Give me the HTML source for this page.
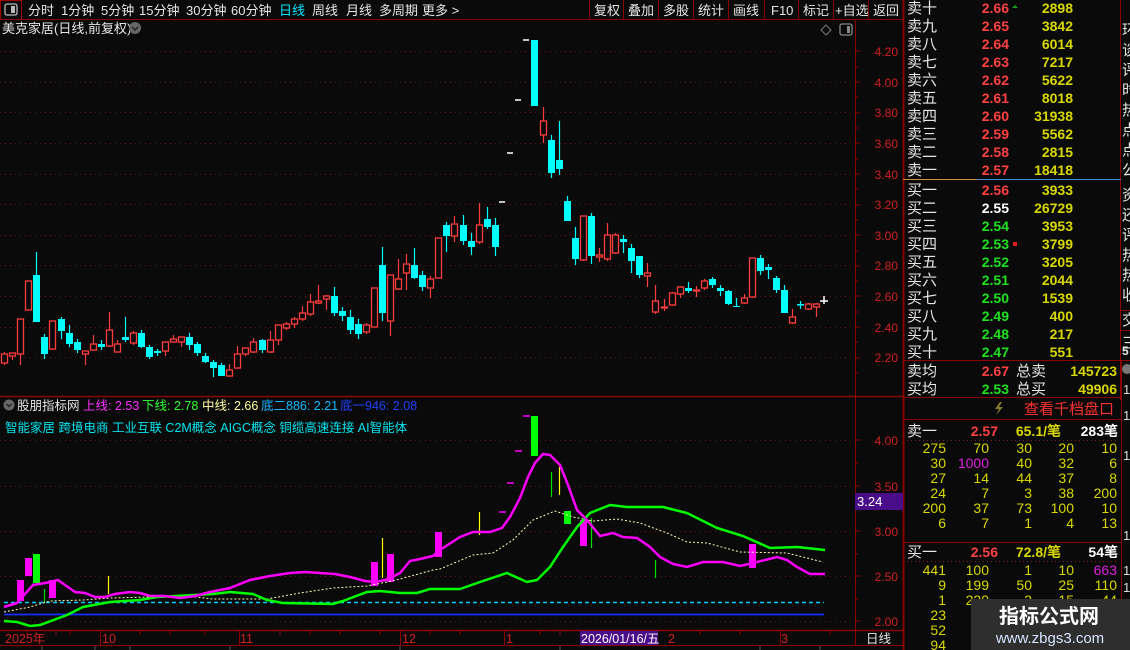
<!DOCTYPE html>
<html><head><meta charset="utf-8"><style>
html,body{margin:0;padding:0;background:#0a0a0a;width:1130px;height:650px;overflow:hidden}
svg{display:block;font-family:"Liberation Sans","Noto Sans CJK SC",sans-serif}
.t{font-size:13px;fill:#e6e6e6}
.ax{font-size:12px;fill:#d02020;text-anchor:end}
.ob{font-size:15px;fill:#e6e6e6}
.pr{font-size:14px;font-weight:bold;text-anchor:end}
.bk{font-size:14px;fill:#d8d800;text-anchor:end}
</style></head><body>
<svg width="1130" height="650" viewBox="0 0 1130 650">
<rect width="1130" height="650" fill="#0a0a0a"/>
<rect x="0.5" y="0.5" width="21" height="19" fill="none" stroke="#a00000"/>
<rect x="5" y="4" width="12" height="11" rx="2" fill="none" stroke="#bbb" stroke-width="1.3"/><rect x="11" y="6" width="4" height="7" fill="#bbb"/>
<line x1="0" y1="19.5" x2="903" y2="19.5" stroke="#8b0000"/>
<g class="t">
<text x="28" y="15">分时</text><text x="61" y="15">1分钟</text><text x="101" y="15">5分钟</text><text x="139" y="15">15分钟</text><text x="186" y="15">30分钟</text><text x="231" y="15">60分钟</text><text x="279" y="15" fill="#00e5ff">日线</text><text x="312" y="15">周线</text><text x="346" y="15">月线</text><text x="379" y="15">多周期</text><text x="422" y="15">更多 &gt;</text>
<text x="594" y="15">复权</text><text x="628" y="15">叠加</text><text x="663" y="15">多股</text><text x="698" y="15">统计</text><text x="733" y="15">画线</text><text x="771" y="15">F10</text><text x="803" y="15">标记</text><text x="835" y="15">+自选</text><text x="873" y="15">返回</text>
</g>
<g stroke="#8b0000"><line x1="589.5" y1="0" x2="589.5" y2="19"/><line x1="623.5" y1="0" x2="623.5" y2="19"/><line x1="658.5" y1="0" x2="658.5" y2="19"/><line x1="693.5" y1="0" x2="693.5" y2="19"/><line x1="728.5" y1="0" x2="728.5" y2="19"/><line x1="764.5" y1="0" x2="764.5" y2="19"/><line x1="798.5" y1="0" x2="798.5" y2="19"/><line x1="833.5" y1="0" x2="833.5" y2="19"/><line x1="868.5" y1="0" x2="868.5" y2="19"/></g>
<text x="2" y="33" class="t" font-size="12.5">美克家居(日线,前复权)</text>
<circle cx="135" cy="28" r="6" fill="#666"/><path d="M132 27l3 3 3-3" stroke="#222" stroke-width="1.5" fill="none"/>
<path d="M826 25l5 5-5 5-5-5z" fill="none" stroke="#777"/>
<rect x="840" y="24" width="12" height="11" rx="2" fill="none" stroke="#888" stroke-width="1.3"/><rect x="847" y="26" width="3" height="7" fill="#888"/>
<g stroke="#5a1414" stroke-dasharray="1 4">
<line x1="0" y1="51.5" x2="855" y2="51.5"/><line x1="0" y1="82.5" x2="855" y2="82.5"/><line x1="0" y1="112.5" x2="855" y2="112.5"/><line x1="0" y1="143.5" x2="855" y2="143.5"/><line x1="0" y1="174.5" x2="855" y2="174.5"/><line x1="0" y1="204.5" x2="855" y2="204.5"/><line x1="0" y1="235.5" x2="855" y2="235.5"/><line x1="0" y1="265.5" x2="855" y2="265.5"/><line x1="0" y1="296.5" x2="855" y2="296.5"/><line x1="0" y1="327.5" x2="855" y2="327.5"/><line x1="0" y1="357.5" x2="855" y2="357.5"/>
</g>
<line x1="855.5" y1="19" x2="855.5" y2="645" stroke="#8b0000"/>
<line x1="903.5" y1="0" x2="903.5" y2="650" stroke="#8b0000" stroke-width="2"/>
<g stroke="#8b0000"><path d="M855 51h5M855 82h5M855 113h5M855 143h5M855 174h5M855 205h5M855 235h5M855 266h5M855 296h5M855 327h5M855 358h5M855 67h3M855 97h3M855 128h3M855 159h3M855 189h3M855 220h3M855 251h3M855 281h3M855 312h3M855 342h3M855 373h3"/></g>
<g class="ax"><text x="898" y="56">4.20</text><text x="898" y="87">4.00</text><text x="898" y="117">3.80</text><text x="898" y="148">3.60</text><text x="898" y="179">3.40</text><text x="898" y="209">3.20</text><text x="898" y="240">3.00</text><text x="898" y="270">2.80</text><text x="898" y="301">2.60</text><text x="898" y="332">2.40</text><text x="898" y="362">2.20</text></g>
<path stroke="#ff3c3c" stroke-width="1.2" fill="none" d="M4.5 352V365M12.5 353V360M20.5 319V365M28.5 281V310M52.5 321V350M85.5 351V365M93.5 335V350M109.5 312V347M117.5 340V352M133.5 331V345M165.5 342V356M173.5 335V342M181.5 337V347M229.5 364V377M237.5 346V369M245.5 348V356M253.5 338V353M270.5 331V353M278.5 325V345M286.5 322V330M294.5 317V328M302.5 306V321M310.5 294V316M318.5 285V304M326.5 295V310M366.5 323V334M374.5 288V327M390.5 275V336M398.5 259V290M406.5 254V290M430.5 276V298M438.5 238V278M454.5 216V242M479.5 203V244M543.5 107V143M583.5 216V261M599.5 248V262M607.5 223V261M615.5 233V254M647.5 263V287M655.5 285V314M664.5 299V311M672.5 292V306M680.5 286V298M696.5 286V297M704.5 279V290M744.5 294V304M752.5 258V298M792.5 309V324M808.5 303V310M816.5 303V317"/>
<g stroke="#ff3c3c" stroke-width="1.3" fill="#0a0a0a">
<rect x="1.5" y="354" width="6" height="9"/><rect x="9.5" y="353" width="6" height="3"/><rect x="17.5" y="319" width="6" height="35"/><rect x="25.5" y="281" width="6" height="29"/><rect x="49.5" y="321" width="6" height="28"/><rect x="82.5" y="351" width="6" height="3"/><rect x="90.5" y="344" width="6" height="6"/><rect x="106.5" y="330" width="6" height="16"/><rect x="114.5" y="344" width="6" height="8"/><rect x="130.5" y="333" width="6" height="10"/><rect x="162.5" y="342" width="6" height="9"/><rect x="170.5" y="339" width="6" height="3"/><rect x="178.5" y="337" width="6" height="5"/><rect x="226.5" y="370" width="6" height="6"/><rect x="234.5" y="354" width="6" height="14"/><rect x="242.5" y="348" width="6" height="6"/><rect x="250.5" y="342" width="6" height="10"/><rect x="267.5" y="340" width="6" height="12"/><rect x="275.5" y="325" width="6" height="15"/><rect x="283.5" y="324" width="6" height="4"/><rect x="291.5" y="319" width="6" height="5"/><rect x="299.5" y="313" width="6" height="6"/><rect x="307.5" y="302" width="6" height="12"/><rect x="315.5" y="301" width="6" height="2"/><rect x="323.5" y="296" width="6" height="3"/><rect x="363.5" y="325" width="6" height="7"/><rect x="371.5" y="288" width="6" height="39"/><rect x="387.5" y="275" width="6" height="46"/><rect x="395.5" y="279" width="6" height="10"/><rect x="403.5" y="264" width="6" height="9"/><rect x="427.5" y="279" width="6" height="9"/><rect x="435.5" y="238" width="6" height="40"/><rect x="451.5" y="224" width="6" height="12"/><rect x="476.5" y="225" width="6" height="17"/><rect x="540.5" y="121" width="6" height="14"/><rect x="580.5" y="216" width="6" height="44"/><rect x="596.5" y="255" width="6" height="2"/><rect x="604.5" y="235" width="6" height="24"/><rect x="612.5" y="235" width="6" height="18"/><rect x="644.5" y="273" width="6" height="3"/><rect x="652.5" y="301" width="6" height="11"/><rect x="661.5" y="307" width="6" height="1"/><rect x="669.5" y="293" width="6" height="12"/><rect x="677.5" y="287" width="6" height="7"/><rect x="693.5" y="290" width="6" height="1"/><rect x="701.5" y="281" width="6" height="7"/><rect x="741.5" y="298" width="6" height="5"/><rect x="749.5" y="258" width="6" height="39"/><rect x="789.5" y="317" width="6" height="6"/><rect x="805.5" y="304" width="6" height="5"/><rect x="813.5" y="304" width="6" height="3"/>
</g>
<path stroke="#00ffff" stroke-width="1.2" fill="none" d="M36.5 252V322M44.5 334V359M61.5 317V339M69.5 325V347M77.5 339V353M101.5 340V350M125.5 317V342M141.5 330V348M149.5 345V359M157.5 349V356M189.5 333V350M197.5 342V356M205.5 353V363M213.5 360V377M221.5 363V376M262.5 339V353M334.5 287V316M342.5 307V321M350.5 310V334M358.5 319V339M382.5 247V321M414.5 248V279M422.5 271V291M446.5 222V252M463.5 215V245M471.5 233V255M487.5 207V229M495.5 218V256M551.5 135V178M559.5 121V175M567.5 196V221M575.5 227V265M591.5 213V264M623.5 235V253M631.5 244V273M639.5 256V278M688.5 282V293M712.5 277V288M720.5 285V296M728.5 290V305M736.5 298V307M760.5 255V275M768.5 264V279M776.5 276V293M784.5 285V313M800.5 301V309"/>
<g fill="#00ffff">
<rect x="33" y="275" width="7" height="47"/><rect x="41" y="337" width="7" height="17"/><rect x="58" y="319" width="7" height="12"/><rect x="66" y="333" width="7" height="11"/><rect x="74" y="342" width="7" height="8"/><rect x="98" y="344" width="7" height="3"/><rect x="122" y="337" width="7" height="3"/><rect x="138" y="333" width="7" height="14"/><rect x="146" y="347" width="7" height="10"/><rect x="154" y="351" width="7" height="2"/><rect x="186" y="337" width="7" height="8"/><rect x="194" y="344" width="7" height="9"/><rect x="202" y="356" width="7" height="6"/><rect x="210" y="362" width="7" height="6"/><rect x="218" y="365" width="7" height="11"/><rect x="259" y="340" width="7" height="10"/><rect x="331" y="296" width="7" height="17"/><rect x="339" y="311" width="7" height="5"/><rect x="347" y="317" width="7" height="13"/><rect x="355" y="324" width="7" height="10"/><rect x="379" y="265" width="7" height="48"/><rect x="411" y="265" width="7" height="13"/><rect x="419" y="275" width="7" height="12"/><rect x="443" y="225" width="7" height="11"/><rect x="460" y="225" width="7" height="16"/><rect x="468" y="241" width="7" height="6"/><rect x="484" y="219" width="7" height="8"/><rect x="492" y="225" width="7" height="22"/><rect x="531" y="40" width="7" height="66"/><rect x="548" y="140" width="7" height="33"/><rect x="556" y="160" width="7" height="9"/><rect x="564" y="201" width="7" height="20"/><rect x="572" y="238" width="7" height="21"/><rect x="588" y="216" width="7" height="40"/><rect x="620" y="239" width="7" height="3"/><rect x="628" y="248" width="7" height="13"/><rect x="636" y="256" width="7" height="19"/><rect x="685" y="288" width="7" height="3"/><rect x="709" y="279" width="7" height="6"/><rect x="717" y="288" width="7" height="3"/><rect x="725" y="291" width="7" height="13"/><rect x="733" y="306" width="7" height="1"/><rect x="757" y="258" width="7" height="13"/><rect x="765" y="267" width="7" height="3"/><rect x="773" y="278" width="7" height="12"/><rect x="781" y="290" width="7" height="23"/><rect x="797" y="304" width="7" height="1.5"/>
</g>
<path stroke="#fff" stroke-width="1.5" d="M499 202h6M507 153h6M515 100h6M523 40h6M820 301h8M824 296v8"/>
<line x1="0" y1="396.5" x2="903" y2="396.5" stroke="#8b0000" stroke-width="1.5"/>
<circle cx="9" cy="405" r="5.5" fill="#666"/><path d="M6.5 404l2.5 2.5 2.5-2.5" stroke="#222" stroke-width="1.4" fill="none"/>
<g font-size="12.5"><text x="17" y="410" fill="#e6e6e6">股朋指标网</text><text x="83" y="410" fill="#ff30ff">上线: 2.53</text><text x="142" y="410" fill="#30ff30">下线: 2.78</text><text x="202" y="410" fill="#ffffa0">中线: 2.66</text><text x="261" y="410" fill="#10b8ff">底二886: 2.21</text><text x="340" y="410" fill="#2040ff">底一946: 2.08</text></g>
<text x="5" y="432" font-size="12.5" fill="#00e5ee">智能家居 跨境电商 工业互联 C2M概念 AIGC概念 铜缆高速连接 AI智能体</text>
<g stroke="#5a1414" stroke-dasharray="1 4"><line x1="0" y1="440.5" x2="855" y2="440.5"/><line x1="0" y1="486.5" x2="855" y2="486.5"/><line x1="0" y1="531.5" x2="855" y2="531.5"/><line x1="0" y1="576.5" x2="855" y2="576.5"/><line x1="0" y1="621.5" x2="855" y2="621.5"/></g>
<g stroke="#8b0000"><path d="M855 440h5M855 486h5M855 531h5M855 576h5M855 621h5M855 463h3M855 508h3M855 554h3M855 599h3"/></g>
<g class="ax" font-size="13"><text x="898" y="445">4.00</text><text x="898" y="491">3.50</text><text x="898" y="536">3.00</text><text x="898" y="581">2.50</text><text x="898" y="626">2.00</text></g>
<rect x="855" y="493" width="48" height="17" fill="#4a0d8a"/><text x="857" y="506" font-size="13" fill="#fff">3.24</text>
<line x1="4" y1="602.5" x2="824" y2="602.5" stroke="#00c8ff" stroke-width="1.5" stroke-dasharray="4 3"/>
<line x1="4" y1="614.5" x2="824" y2="614.5" stroke="#1030ff" stroke-width="1.8"/>
<g fill="#ff00ff"><rect x="17" y="580" width="7" height="21"/><rect x="25" y="558" width="7" height="18"/><rect x="49" y="580" width="7" height="18"/><rect x="371" y="562" width="7" height="24"/><rect x="387" y="554" width="7" height="28"/><rect x="435" y="532" width="7" height="25"/><rect x="580" y="520" width="7" height="26"/><rect x="749" y="544" width="7" height="24"/></g>
<g fill="#00ff00"><rect x="33" y="554" width="7" height="29"/><rect x="531" y="416" width="7" height="40"/><rect x="564" y="511" width="7" height="13"/></g>
<path stroke="#ff00ff" stroke-width="1.5" d="M499 512h7M507 483h7M515 451h7M523 416h7"/>
<path stroke="#ffff00" stroke-width="1.2" d="M108.5 576V594M382.5 538V578M479.5 512V535M559.5 467V495"/>
<path stroke="#00dd00" stroke-width="1.2" d="M44.5 589V603M551.5 472V497M591.5 518V548M655.5 560V578"/>
<polyline fill="none" stroke="#ffffb0" stroke-width="1" stroke-dasharray="2 2" points="4,612 30,607 50,601 83,600 110,598 150,597 187,596 213,599 267,599 300,593 333,588 367,586 387,582 400,579 433,570 440,569 473,555 493,553 513,540 533,520 555,511 573,517 593,521 617,519 640,523 667,533 687,542 707,543 740,552 787,553 823,562"/>
<polyline fill="none" stroke="#00ff00" stroke-width="2.5" points="4,621 17,622 30,626 40,625 67,615 83,607 110,602 140,600 157,597 213,594 230,592 253,594 267,600 283,603 333,604 343,601 367,592 380,591 400,593 417,593 430,589 440,589 460,589 480,582 507,573 527,582 537,580 550,567 563,547 577,527 590,513 610,505 627,507 663,507 687,513 717,528 743,536 770,548 797,547 825,550"/>
<polyline fill="none" stroke="#ff00ff" stroke-width="2.5" points="4,607 17,603 25,594 33,585 45,583 50,582 58,580 65,585 75,592 85,593 95,597 105,597 115,594 130,592 140,593 150,596 165,596 180,598 195,596 210,592 230,588 250,580 270,576 290,573 305,572 320,573 335,574 350,577 365,581 375,582 385,580 392,577 400,573 410,561 420,559 433,556 440,550 460,537 473,532 490,532 502,528 510,517 520,498 528,477 535,463 543,454 550,455 560,465 568,485 577,510 587,520 600,536 613,533 623,537 637,538 650,547 660,557 673,564 687,567 703,562 723,562 740,566 753,563 777,557 787,560 797,567 810,574 825,574"/>
<line x1="0" y1="630.5" x2="903" y2="630.5" stroke="#8b0000" stroke-width="1.5"/>
<line x1="0" y1="645.5" x2="903" y2="645.5" stroke="#8b0000"/>
<g stroke="#8b0000"><path d="M100.5 631v14M239.5 631v14M400.5 631v14M504.5 631v14M780.5 631v14M27 631v4M56 631v4M70 631v4M140 631v4M170 631v4M205 631v4M280 631v4M310 631v4M340 631v4M380 631v4M430 631v4M460 631v4M540 631v4M560 631v4M700 631v4M740 631v4M830 631v4"/></g>
<g font-size="12.5" fill="#d02020"><text x="5" y="643">2025年</text><text x="102" y="643">10</text><text x="240" y="643">11</text><text x="402" y="643">12</text><text x="506" y="643">1</text><text x="668" y="643">2</text><text x="781" y="643">3</text></g>
<rect x="580" y="631" width="78" height="14" fill="#4a0d8a"/><text x="581" y="643" font-size="12.5" fill="#fff">2026/01/16/五</text>
<text x="866" y="643" font-size="12.5" fill="#e6e6e6">日线</text>
<g stroke="#555"><path d="M42 646v4M95 646v4M130 646v4M230 646v4M400 646v4M560 646v4M760 646v4M820 646v4"/></g>
<line x1="1120.5" y1="0" x2="1120.5" y2="400" stroke="#8b0000"/>
<line x1="903" y1="179.5" x2="977" y2="179.5" stroke="#c89040"/><line x1="977" y1="179.5" x2="1121" y2="179.5" stroke="#4a8ad0"/>
<g class="ob">
<text x="907" y="13">卖十</text><text x="907" y="31">卖九</text><text x="907" y="49">卖八</text><text x="907" y="67">卖七</text><text x="907" y="85">卖六</text><text x="907" y="103">卖五</text><text x="907" y="121">卖四</text><text x="907" y="139">卖三</text><text x="907" y="157">卖二</text><text x="907" y="175">卖一</text>
<text x="907" y="195">买一</text><text x="907" y="213">买二</text><text x="907" y="231">买三</text><text x="907" y="249">买四</text><text x="907" y="267">买五</text><text x="907" y="285">买六</text><text x="907" y="303">买七</text><text x="907" y="321">买八</text><text x="907" y="339">买九</text><text x="907" y="357">买十</text>
</g>
<g class="pr" fill="#ff4040"><text x="1009" y="13">2.66</text><text x="1009" y="31">2.65</text><text x="1009" y="49">2.64</text><text x="1009" y="67">2.63</text><text x="1009" y="85">2.62</text><text x="1009" y="103">2.61</text><text x="1009" y="121">2.60</text><text x="1009" y="139">2.59</text><text x="1009" y="157">2.58</text><text x="1009" y="175">2.57</text><text x="1009" y="195">2.56</text></g>
<text class="pr" x="1009" y="213" fill="#ffffff">2.55</text>
<g class="pr" fill="#20e020"><text x="1009" y="231">2.54</text><text x="1009" y="249">2.53</text><text x="1009" y="267">2.52</text><text x="1009" y="285">2.51</text><text x="1009" y="303">2.50</text><text x="1009" y="321">2.49</text><text x="1009" y="339">2.48</text><text x="1009" y="357">2.47</text></g>
<g class="pr" fill="#d8d800"><text x="1073" y="13">2898</text><text x="1073" y="31">3842</text><text x="1073" y="49">6014</text><text x="1073" y="67">7217</text><text x="1073" y="85">5622</text><text x="1073" y="103">8018</text><text x="1073" y="121">31938</text><text x="1073" y="139">5562</text><text x="1073" y="157">2815</text><text x="1073" y="175">18418</text><text x="1073" y="195">3933</text><text x="1073" y="213">26729</text><text x="1073" y="231">3953</text><text x="1073" y="249">3799</text><text x="1073" y="267">3205</text><text x="1073" y="285">2044</text><text x="1073" y="303">1539</text><text x="1073" y="321">400</text><text x="1073" y="339">217</text><text x="1073" y="357">551</text></g>
<path d="M1012 8l3-3 3 3z" fill="#1a9a1a"/><rect x="1013" y="242" width="4" height="4" fill="#e02020"/>
<g font-size="15" fill="#e6e6e6"><text x="1122" y="35">环</text><text x="1122" y="55">谈</text><text x="1122" y="75">评</text><text x="1122" y="95">时</text><text x="1122" y="115">热</text><text x="1122" y="135">点</text><text x="1122" y="155">点</text><text x="1122" y="175">公</text><text x="1122" y="200">资</text><text x="1122" y="220">还</text><text x="1122" y="240">评</text><text x="1122" y="260">热</text><text x="1122" y="280">热</text><text x="1122" y="300">收</text><text x="1122" y="325">交</text><text x="1122" y="348">三</text><text x="1122" y="355" font-weight="bold" font-size="12">5</text></g>
<line x1="1120" y1="310.5" x2="1130" y2="310.5" stroke="#8b0000"/><line x1="1120" y1="330.5" x2="1130" y2="330.5" stroke="#8b0000"/>
<g stroke="#8b0000"><line x1="903" y1="360.5" x2="1130" y2="360.5"/><line x1="903" y1="397.5" x2="1121" y2="397.5"/><line x1="903" y1="419.5" x2="1121" y2="419.5"/><line x1="903" y1="542.5" x2="1121" y2="542.5"/><line x1="1121.5" y1="360" x2="1121.5" y2="650"/></g>
<g class="ob"><text x="907" y="376">卖均</text><text x="907" y="394">买均</text><text x="1016" y="376">总卖</text><text x="1016" y="394">总买</text><text x="907" y="436">卖一</text><text x="907" y="557">买一</text></g>
<text class="pr" x="1009" y="376" fill="#ff4040">2.67</text><text class="pr" x="1009" y="394" fill="#20e020">2.53</text>
<text class="pr" x="1117" y="376" fill="#d8d800">145723</text><text class="pr" x="1117" y="394" fill="#d8d800">49906</text>
<circle cx="1127" cy="369" r="5" fill="#777"/><text x="1123" y="394" font-size="13" fill="#ddd">1</text>
<path d="M1000 402l-5 7h4l-3 6 7-8h-4l3-5z" fill="#8a7a30"/>
<text x="1024" y="414" font-size="15" fill="#ff3030">查看千档盘口</text>
<text class="pr" x="998" y="436" fill="#ff4040">2.57</text><text x="1061" y="436" font-size="14" fill="#d8d800" text-anchor="end" font-weight="bold">65.1/笔</text><text x="1118" y="436" font-size="14" fill="#fff" text-anchor="end" font-weight="bold">283笔</text>
<text class="pr" x="998" y="557" fill="#ff4040">2.56</text><text x="1061" y="557" font-size="14" fill="#d8d800" text-anchor="end" font-weight="bold">72.8/笔</text><text x="1118" y="557" font-size="14" fill="#fff" text-anchor="end" font-weight="bold">54笔</text>
<g stroke="#8b1a1a" stroke-dasharray="1 3"><line x1="907" y1="440.5" x2="1118" y2="440.5"/><line x1="907" y1="561.5" x2="1118" y2="561.5"/></g>
<g class="bk">
<text x="946" y="453">275</text><text x="989" y="453">70</text><text x="1032" y="453">30</text><text x="1074" y="453">20</text><text x="1117" y="453">10</text>
<text x="946" y="468">30</text><text x="989" y="468" fill="#e020e0">1000</text><text x="1032" y="468">40</text><text x="1074" y="468">32</text><text x="1117" y="468">6</text>
<text x="946" y="483">27</text><text x="989" y="483">14</text><text x="1032" y="483">44</text><text x="1074" y="483">37</text><text x="1117" y="483">8</text>
<text x="946" y="498">24</text><text x="989" y="498">7</text><text x="1032" y="498">3</text><text x="1074" y="498">38</text><text x="1117" y="498">200</text>
<text x="946" y="513">200</text><text x="989" y="513">37</text><text x="1032" y="513">73</text><text x="1074" y="513">100</text><text x="1117" y="513">10</text>
<text x="946" y="528">6</text><text x="989" y="528">7</text><text x="1032" y="528">1</text><text x="1074" y="528">4</text><text x="1117" y="528">13</text>
<text x="946" y="575">441</text><text x="989" y="575">100</text><text x="1032" y="575">1</text><text x="1074" y="575">10</text><text x="1117" y="575" fill="#e020e0">663</text>
<text x="946" y="590">9</text><text x="989" y="590">199</text><text x="1032" y="590">50</text><text x="1074" y="590">25</text><text x="1117" y="590">110</text>
<text x="946" y="605">1</text><text x="989" y="605">220</text><text x="1032" y="605">3</text><text x="1074" y="605">15</text><text x="1117" y="605">44</text>
<text x="946" y="620">23</text><text x="946" y="635">52</text><text x="989" y="635">2</text><text x="946" y="650">94</text>
</g>
<g font-size="13" fill="#ddd"><text x="1123" y="420">1</text><text x="1123" y="460">1</text><text x="1123" y="540">1</text><text x="1123" y="575">1</text><text x="1123" y="592">1</text></g>
<rect x="971" y="599" width="159" height="51" fill="#2e2e2e"/>
<text x="1049" y="623" font-size="20" font-weight="bold" fill="#fff" text-anchor="middle">指标公式网</text>
<text x="1050" y="643" font-size="15" fill="#d8e4ff" text-anchor="middle">www.zbgs3.com</text>
</svg>
</body></html>
